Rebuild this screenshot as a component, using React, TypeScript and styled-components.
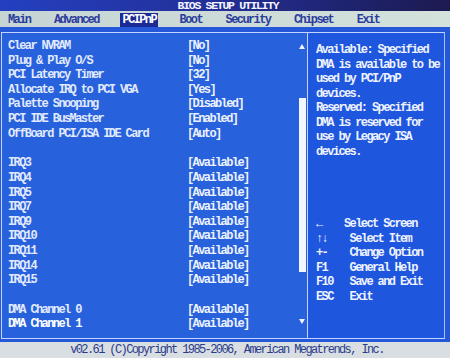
import styled, { createGlobalStyle } from "styled-components"

const GlobalStyle = createGlobalStyle`
  html, body {
    margin: 0;
    padding: 0;
    background: #2458d8;
  }
`

const TABS = ["Main", "Advanced", "PCIPnP", "Boot", "Security", "Chipset", "Exit"]
const ACTIVE_TAB = "PCIPnP"

type Row = { label: string; value: string; bright?: boolean } | null

const ROWS: Row[] = [
  { label: "Clear NVRAM", value: "[No]" },
  { label: "Plug & Play O/S", value: "[No]" },
  { label: "PCI Latency Timer", value: "[32]" },
  { label: "Allocate IRQ to PCI VGA", value: "[Yes]" },
  { label: "Palette Snooping", value: "[Disabled]" },
  { label: "PCI IDE BusMaster", value: "[Enabled]" },
  { label: "OffBoard PCI/ISA IDE Card", value: "[Auto]" },
  null,
  { label: "IRQ3", value: "[Available]" },
  { label: "IRQ4", value: "[Available]" },
  { label: "IRQ5", value: "[Available]" },
  { label: "IRQ7", value: "[Available]" },
  { label: "IRQ9", value: "[Available]" },
  { label: "IRQ10", value: "[Available]" },
  { label: "IRQ11", value: "[Available]" },
  { label: "IRQ14", value: "[Available]" },
  { label: "IRQ15", value: "[Available]" },
  null,
  { label: "DMA Channel 0", value: "[Available]" },
  { label: "DMA Channel 1", value: "[Available]", bright: true },
]

const HELP = [
  "Available: Specified",
  "DMA is available to be",
  "used by PCI/PnP",
  "devices.",
  "Reserved: Specified",
  "DMA is reserved for",
  "use by Legacy ISA",
  "devices.",
]

const KEYS = [
  "←    Select Screen",
  "↑↓    Select Item",
  "+-    Change Option",
  "F1    General Help",
  "F10   Save and Exit",
  "ESC   Exit",
]

const Arrow = ({ down }: { down?: boolean }) => (
  <svg width="6" height="5" viewBox="0 0 6 5">
    <polygon points={down ? "0,0 6,0 3,5" : "3,0 6,5 0,5"} fill="#eef3ff" />
  </svg>
)

const App = () => {
  return (
    <>
      <GlobalStyle />
      <Screen>
        <TitleBar>BIOS SETUP UTILITY</TitleBar>
        <MenuBar>
          {TABS.map(tab => (
            <Tab key={tab} $active={tab === ACTIVE_TAB}>
              {tab}
            </Tab>
          ))}
        </MenuBar>
        <Body>
          <Frame>
            <LeftPanel>
              <List>
                {ROWS.map((row, i) =>
                  row ? (
                    <SettingRow key={i} $bright={row.bright}>
                      <Label>{row.label}</Label>
                      <Value>{row.value}</Value>
                    </SettingRow>
                  ) : (
                    <BlankRow key={i} />
                  )
                )}
              </List>
              <ScrollColumn>
                <ArrowBox $top>
                  <Arrow />
                </ArrowBox>
                <Thumb />
                <ArrowBox>
                  <Arrow down />
                </ArrowBox>
              </ScrollColumn>
            </LeftPanel>
            <RightPanel>
              <HelpText>
                {HELP.map(line => (
                  <Line key={line}>{line}</Line>
                ))}
              </HelpText>
              <KeyList>
                {KEYS.map(line => (
                  <Line key={line}>{line}</Line>
                ))}
              </KeyList>
            </RightPanel>
          </Frame>
        </Body>
        <Footer>v02.61 (C)Copyright 1985-2006, American Megatrends, Inc.</Footer>
      </Screen>
    </>
  )
}

export default App

const Screen = styled.div`
  width: 450px;
  height: 358px;
  overflow: hidden;
  display: flex;
  flex-direction: column;
  font-family: "Liberation Mono", "DejaVu Sans Mono", monospace;
  font-weight: bold;
  font-size: 12px;
  letter-spacing: -1.6px;
  background: #2458d8;
`
const TitleBar = styled.div`
  height: 11px;
  line-height: 11px;
  text-align: center;
  color: #f4f4ff;
  font-size: 11.5px;
  letter-spacing: -1.3px;
  background: linear-gradient(90deg, #2440c0 0%, #23309a 45%, #1c1a50 100%);
  padding-left: 6px;
`
const MenuBar = styled.div`
  height: 16px;
  display: flex;
  align-items: flex-end;
  gap: 19.6px;
  padding-left: 6px;
  background: linear-gradient(90deg, #c6d4d4, #d4e2dc);
`
const Tab = styled.div<{ $active?: boolean }>`
  height: 14px;
  line-height: 14px;
  padding: 0 2px;
  color: ${p => (p.$active ? "#ffffff" : "#2a3c9c")};
  background: ${p => (p.$active ? "#1c2a96" : "transparent")};
`
const Body = styled.div`
  flex: 1;
  padding: 5px 5px 3px 1px;
  display: flex;
  background: #2558d8;
`
const Frame = styled.div`
  flex: 1;
  display: flex;
  border: 1px solid #c4d4ff;
  border-right-color: #a8c0ff;
`
const LeftPanel = styled.div`
  width: 305px;
  display: flex;
  background: #2762dc;
`
const List = styled.div`
  flex: 1;
  padding: 6px 0 0 6px;
  display: flex;
  flex-direction: column;
`
const SettingRow = styled.div<{ $bright?: boolean }>`
  display: flex;
  height: 14.6px;
  line-height: 14.6px;
  color: ${p => (p.$bright ? "#ffffff" : "#e2eaff")};
`
const BlankRow = styled.div`
  height: 15.2px;
`
const Label = styled.span`
  width: 179px;
  white-space: pre;
`
const Value = styled.span`
  white-space: pre;
  color: #edf2ff;
`
const ScrollColumn = styled.div`
  width: 8px;
  margin-right: 1px;
  display: flex;
  flex-direction: column;
  align-items: center;
`
const ArrowBox = styled.div<{ $top?: boolean }>`
  height: 5px;
  display: flex;
  margin-top: ${p => (p.$top ? "11px" : "auto")};
  margin-bottom: ${p => (p.$top ? "0" : "14px")};
`
const Thumb = styled.div`
  width: 7px;
  height: 174px;
  margin-top: 49px;
  background: #f2f6ff;
`
const RightPanel = styled.div`
  flex: 1;
  border-left: 1px solid #c4d4ff;
  padding: 10px 2px 0 8px;
  background: #1f56de;
  color: #eef3ff;
  display: flex;
  flex-direction: column;
`
const HelpText = styled.div`
  display: flex;
  flex-direction: column;
`
const KeyList = styled.div`
  margin-top: 58px;
  display: flex;
  flex-direction: column;
`
const Line = styled.div`
  height: 14.5px;
  line-height: 14.5px;
  white-space: pre;
`
const Footer = styled.div`
  height: 16px;
  line-height: 16px;
  text-align: center;
  background: #d8dee2;
  color: #2a3c8c;
  font-weight: normal;
  padding-left: 4px;
`
